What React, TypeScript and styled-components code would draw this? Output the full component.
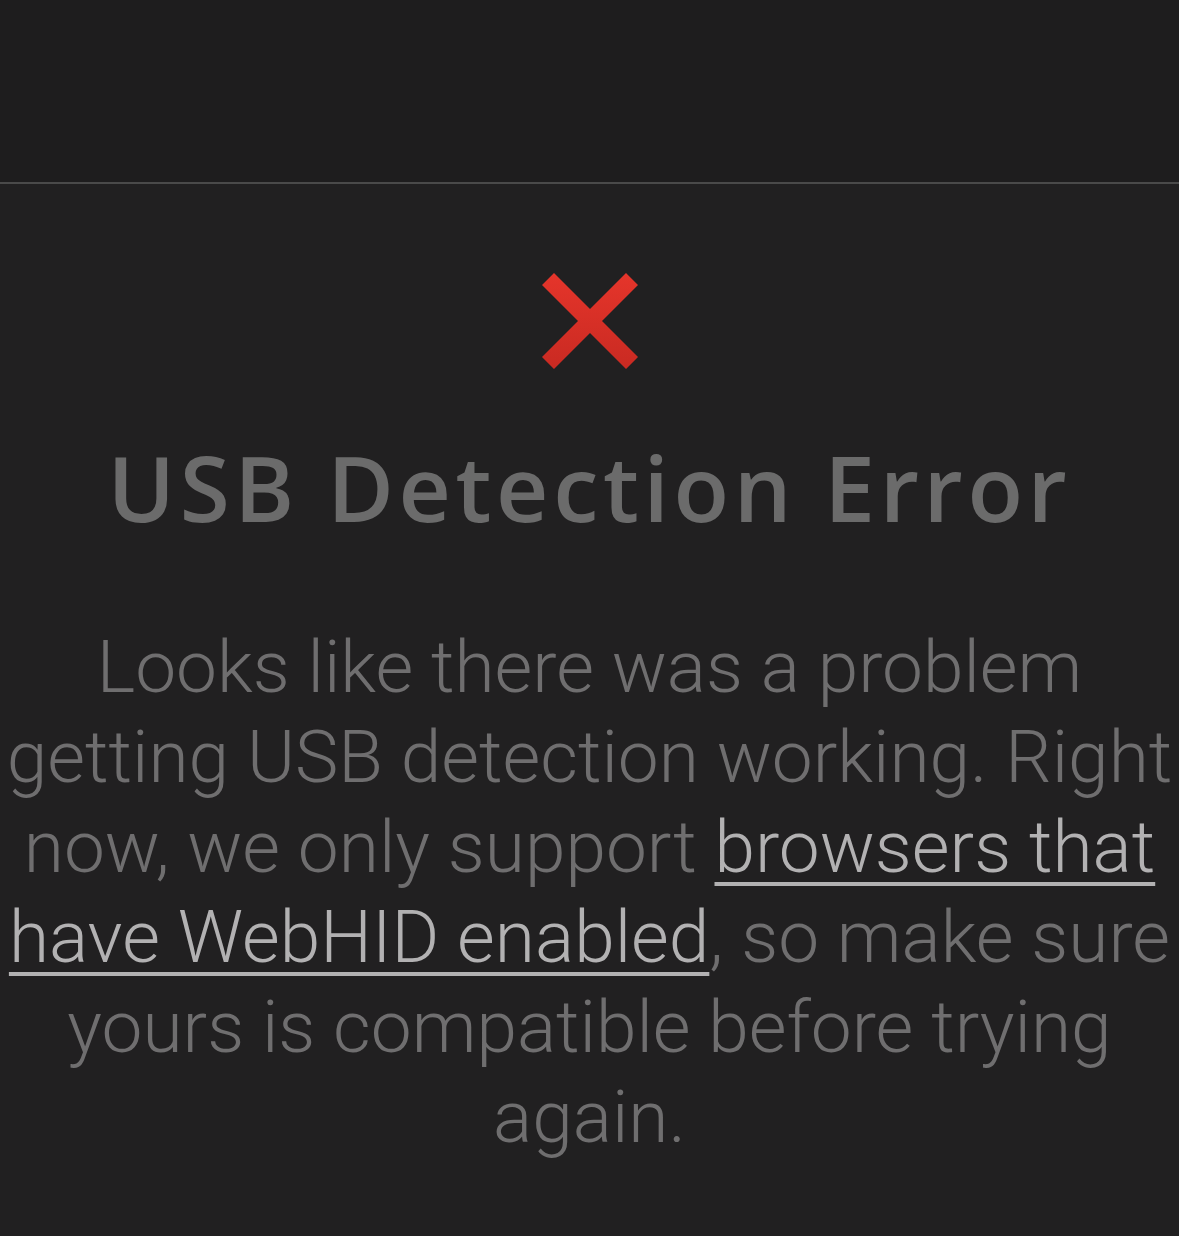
import React from "react";
import styled, { createGlobalStyle } from "styled-components";

const GlobalStyle = createGlobalStyle`
    html, body {
        margin: 0;
        padding: 0;
        background-color: #212021;
    }
    body {
        font-family: Roboto, "Open Sans", sans-serif;
    }
`;

const Page = styled.div`
    display: flex;
    flex-direction: column;
    min-height: 1236px;
    background-color: #212021;
`;
const TopBar = styled.header`
    height: 182px;
    background-color: #1e1d1e;
    border-bottom: 2px solid #4a4a4a;
`;
const Main = styled.main`
    display: flex;
    flex-direction: column;
    align-items: center;
    padding-top: 89px;
`;
const IconBox = styled.div`
    width: 96px;
    height: 96px;
`;
const Heading = styled.h1`
    margin: 64px 0 0 0;
    font-family: "Open Sans", sans-serif;
    font-weight: 600;
    font-size: 91px;
    line-height: 1.2;
    letter-spacing: 4.6px;
    color: #6b6b6b;
`;
const Message = styled.p`
    margin: 80px 0 0 0;
    text-align: center;
    font-family: Roboto, sans-serif;
    font-weight: 300;
    font-size: 73px;
    line-height: 90px;
    color: #6f6e6f;
`;
const Line = styled.span`
    display: block;
    white-space: nowrap;
`;
const Link = styled.a`
    color: #b2b1b2;
    text-decoration: underline;
    text-decoration-thickness: 4px;
    text-underline-offset: 10px;
`;

function CrossMark() {
    return (
        <svg width="96" height="96" viewBox="0 0 96 96">
            <defs>
                <linearGradient id="xg" x1="0" y1="0" x2="0" y2="1">
                    <stop offset="0" stopColor="#e5352b" />
                    <stop offset="1" stopColor="#c92a22" />
                </linearGradient>
            </defs>
            <path
                d="M12 0 L48 36 L84 0 L96 12 L60 48 L96 84 L84 96 L48 60 L12 96 L0 84 L36 48 L0 12 Z"
                fill="url(#xg)"
            />
        </svg>
    );
}

function App() {
    return (
        <>
            <GlobalStyle />
            <Page>
                <TopBar />
                <Main>
                    <IconBox>
                        <CrossMark />
                    </IconBox>
                    <Heading>USB Detection Error</Heading>
                    <Message>
                        <Line>Looks like there was a problem</Line>
                        <Line>getting USB detection working. Right</Line>
                        <Line>
                            now, we only support <Link href="#">browsers that</Link>
                        </Line>
                        <Line>
                            <Link href="#">have WebHID enabled</Link>, so make sure
                        </Line>
                        <Line>yours is compatible before trying</Line>
                        <Line>again.</Line>
                    </Message>
                </Main>
            </Page>
        </>
    );
}

export default App;
